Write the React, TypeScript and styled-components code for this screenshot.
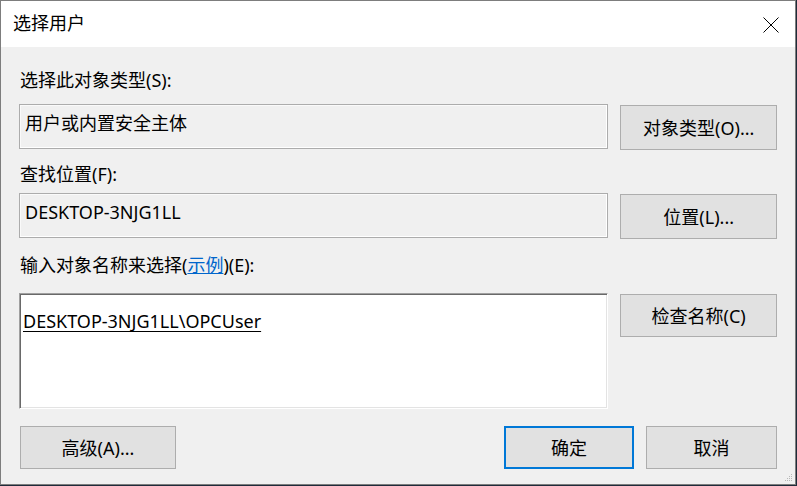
import styled, { createGlobalStyle } from 'styled-components';

const GlobalStyle = createGlobalStyle`
  html, body {
    margin: 0;
    padding: 0;
    background: #1f2b3a;
  }
  * {
    box-sizing: border-box;
  }
`;

const FONT = `"Noto Sans", "Noto Sans CJK SC", sans-serif`;

export default function App() {
  return (
    <>
      <GlobalStyle />
      <Window>
        <TitleBar>
          <Title>选择用户</Title>
          <CloseButton aria-label="关闭">
            <svg width="16" height="16" viewBox="0 0 16 16">
              <path d="M0.5 0.5 L15.5 15.5 M15.5 0.5 L0.5 15.5" stroke="#000" strokeWidth="1" fill="none" />
            </svg>
          </CloseButton>
        </TitleBar>

        <Body>
          <Label>选择此对象类型(S):</Label>
          <FieldRow gap="14">
            <ReadOnlyBox>用户或内置安全主体</ReadOnlyBox>
            <SideButton>对象类型(O)...</SideButton>
          </FieldRow>

          <Label gap="14">查找位置(F):</Label>
          <FieldRow gap="9">
            <ReadOnlyBox>DESKTOP-3NJG1LL</ReadOnlyBox>
            <SideButton>位置(L)...</SideButton>
          </FieldRow>

          <Label gap="16">
            输入对象名称来选择(<HelpLink>示例</HelpLink>)(E):
          </Label>
          <FieldRow gap="18">
            <NameBox>
              <ResolvedName>DESKTOP-3NJG1LL\OPCUser</ResolvedName>
            </NameBox>
            <SideButton short>检查名称(C)</SideButton>
          </FieldRow>

          <Footer>
            <DialogButton width="156">高级(A)...</DialogButton>
            <FooterRight>
              <DialogButton width="130" primary>确定</DialogButton>
              <DialogButton width="131">取消</DialogButton>
            </FooterRight>
          </Footer>
        </Body>

        <Grip>
          <svg width="10" height="10" viewBox="0 0 10 10">
            <rect x="8" y="2" width="1" height="1" fill="#b8b8b8" />
            <rect x="6" y="4" width="1" height="1" fill="#b8b8b8" />
            <rect x="8" y="4" width="1" height="1" fill="#b8b8b8" />
            <rect x="4" y="6" width="1" height="1" fill="#b8b8b8" />
            <rect x="6" y="6" width="1" height="1" fill="#b8b8b8" />
            <rect x="8" y="6" width="1" height="1" fill="#b8b8b8" />
            <rect x="2" y="8" width="1" height="1" fill="#b8b8b8" />
            <rect x="4" y="8" width="1" height="1" fill="#b8b8b8" />
            <rect x="6" y="8" width="1" height="1" fill="#b8b8b8" />
            <rect x="8" y="8" width="1" height="1" fill="#b8b8b8" />
          </svg>
        </Grip>
      </Window>
    </>
  );
}

const Window = styled.div`
  position: relative;
  width: 796px;
  height: 485px;
  display: flex;
  flex-direction: column;
  background: #f0f0f0;
  border: 1px solid #7d7d7d;
  font-family: ${FONT};
  font-size: 18px;
  color: #000;
`;

const TitleBar = styled.div`
  display: flex;
  align-items: center;
  justify-content: space-between;
  height: 46px;
  padding: 0 16px 0 12px;
  background: #fff;
`;

const Title = styled.span`
  line-height: 20px;
  margin-top: -2px;
`;

const CloseButton = styled.div`
  display: flex;
  width: 16px;
  height: 16px;
  margin-top: 1px;
`;

const Body = styled.div`
  display: flex;
  flex-direction: column;
  padding: 23px 18px 0 18px;
`;

const Label = styled.div<{ gap?: string }>`
  height: 20px;
  line-height: 20px;
  padding-left: 1px;
  margin-top: ${(p) => p.gap ?? 0}px;
  white-space: nowrap;
`;

const HelpLink = styled.a`
  color: #0066cc;
  text-decoration: underline;
  cursor: pointer;
`;

const FieldRow = styled.div<{ gap: string }>`
  display: flex;
  align-items: flex-start;
  gap: 12px;
  margin-top: ${(p) => p.gap}px;
`;

const ReadOnlyBox = styled.div`
  width: 591px;
  height: 45px;
  padding: 8px 5px;
  line-height: 20px;
  background: #f0f0f0;
  border: 1px solid #acacac;
  box-shadow: inset -1px -1px 0 #fff, inset 1px 1px 0 #fafafa;
  white-space: nowrap;
`;

const NameBox = styled.div`
  width: 590px;
  height: 116px;
  padding: 15px 3px;
  background: #fff;
  border-top: 1px solid #a0a0a0;
  border-left: 1px solid #a0a0a0;
  border-right: 1px solid #fff;
  border-bottom: 1px solid #fff;
  box-shadow: inset 1px 1px 0 #696969, inset -1px -1px 0 #e3e3e3;
`;

const ResolvedName = styled.span`
  line-height: 20px;
  text-decoration: underline;
  text-underline-offset: 3px;
  white-space: nowrap;
`;

const ButtonBase = styled.button`
  font-family: ${FONT};
  font-size: 18px;
  color: #000;
  background: #e1e1e1;
  border: 1px solid #adadad;
  padding: 0;
  line-height: 20px;
  white-space: nowrap;
  cursor: default;
`;

const SideButton = styled(ButtonBase)<{ short?: boolean }>`
  width: 157px;
  height: ${(p) => (p.short ? 43 : 45)}px;
  margin-top: 1px;
`;

const Footer = styled.div`
  display: flex;
  justify-content: space-between;
  margin-top: 17px;
  padding-left: 1px;
`;

const FooterRight = styled.div`
  display: flex;
  gap: 12px;
`;

const DialogButton = styled(ButtonBase)<{ width: string; primary?: boolean }>`
  width: ${(p) => p.width}px;
  height: 43px;
  ${(p) =>
    p.primary &&
    `
    border-color: #0078d7;
    box-shadow: inset 0 0 0 1px #0078d7;
  `}
`;

const Grip = styled.div`
  position: absolute;
  right: 2px;
  bottom: 2px;
  width: 10px;
  height: 10px;
  display: flex;
`;
